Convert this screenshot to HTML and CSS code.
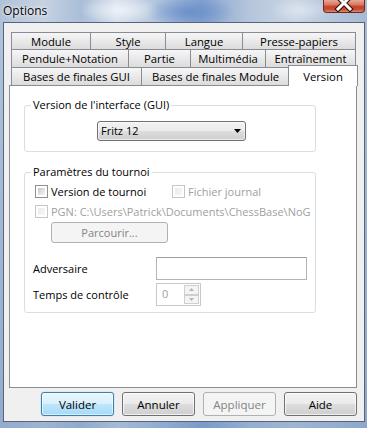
FILE: index.html
```html
<!DOCTYPE html>
<html lang="fr">
<head>
<meta charset="utf-8">
<title>Options</title>
<link rel="stylesheet" href="styles.css">
</head>
<body>
<div class="window">
  <div class="titlebar">
    <span class="title">Options</span>
    <div class="close">
      <svg width="42" height="13" viewBox="0 0 42 13">
        <path d="M15 -3 L27 9 M27 -3 L15 9" stroke="#3b140c" stroke-width="5.2" stroke-linecap="square" fill="none"/>
        <path d="M15 -3 L27 9 M27 -3 L15 9" stroke="#ffffff" stroke-width="3" stroke-linecap="square" fill="none"/>
      </svg>
    </div>
  </div>
  <div class="client">
    <div class="tabs">
      <div class="tabrow r1">
        <div class="tab">Module</div>
        <div class="tab">Style</div>
        <div class="tab">Langue</div>
        <div class="tab">Presse-papiers</div>
      </div>
      <div class="tabrow r2">
        <div class="tab">Pendule+Notation</div>
        <div class="tab">Partie</div>
        <div class="tab">Multimédia</div>
        <div class="tab">Entraînement</div>
      </div>
      <div class="tabrow r3">
        <div class="tab">Bases de finales GUI</div>
        <div class="tab">Bases de finales Module</div>
        <div class="tab active">Version</div>
      </div>
    </div>
    <div class="panel">
      <fieldset class="group g1">
        <legend>Version de l'interface (GUI)</legend>
        <div class="select">
          <span>Fritz 12</span>
          <svg class="arrow" width="7" height="4" viewBox="0 0 7 4"><path d="M0 0 H7 L3.5 4 Z" fill="#000"/></svg>
        </div>
      </fieldset>
      <fieldset class="group g2">
        <legend>Paramètres du tournoi</legend>
        <div class="check-row first">
          <label class="check tourn"><span class="cb"></span><span>Version de tournoi</span></label>
          <label class="check disabled"><span class="cb"></span><span>Fichier journal</span></label>
        </div>
        <div class="check-row">
          <label class="check disabled"><span class="cb"></span><span>PGN: C:\Users\Patrick\Documents\ChessBase\NoG</span></label>
        </div>
        <div class="btn browse disabled">Parcourir...</div>
        <div class="field-row adv">
          <span class="label">Adversaire</span>
          <div class="input"></div>
        </div>
        <div class="field-row tc">
          <span class="label">Temps de contrôle</span>
          <div class="spin">
            <span class="spin-val">0</span>
            <div class="spin-btns">
              <div class="spin-btn"><svg width="5" height="3" viewBox="0 0 5 3"><path d="M0 3 H5 L2.5 0 Z" fill="#b5b5b5"/></svg></div>
              <div class="spin-btn"><svg width="5" height="3" viewBox="0 0 5 3"><path d="M0 0 H5 L2.5 3 Z" fill="#b5b5b5"/></svg></div>
            </div>
          </div>
        </div>
      </fieldset>
    </div>
    <div class="buttons">
      <div class="btn default">Valider</div>
      <div class="btn">Annuler</div>
      <div class="btn disabled">Appliquer</div>
      <div class="btn">Aide</div>
    </div>
  </div>
</div>
</body>
</html>
```

FILE: styles.css
```css
* { box-sizing: border-box; }

html, body {
  margin: 0;
  padding: 0;
}

body {
  width: 367px;
  height: 428px;
  overflow: hidden;
  font-family: "Open Sans", "Noto Sans", sans-serif;
  font-size: 11px;
  color: #000;
}

.window {
  height: 428px;
  display: flex;
  flex-direction: column;
  background:
    radial-gradient(ellipse 40px 14px at 120px 10px, rgba(240,244,249,0.9), rgba(240,244,249,0) 100%),
    radial-gradient(ellipse 45px 16px at 190px 12px, rgba(100,138,198,0.85), rgba(100,138,198,0) 100%),
    radial-gradient(ellipse 30px 12px at 300px 10px, rgba(225,232,241,0.8), rgba(225,232,241,0) 100%),
    linear-gradient(to bottom, rgba(255,255,255,0) 0px, rgba(255,255,255,0) 22px, rgba(110,142,192,0.45) 100%),
    linear-gradient(to right, #b0c2d9 0%, #c6d2e1 12%, #a9bed8 22%, #d3dde9 32%, #abc0dc 45%, #86a4d0 55%, #b5c6dc 68%, #c8d4e3 80%, #a5bad6 100%);
}

.titlebar {
  height: 22px;
  display: flex;
  justify-content: space-between;
  align-items: flex-start;
  flex: none;
}

.title {
  padding: 3px 0 0 3px;
  font-size: 12px;
  line-height: 16px;
  color: #000;
  text-shadow: 0 0 5px rgba(255,255,255,0.9), 0 0 2px rgba(255,255,255,0.9);
}

.close {
  width: 42px;
  height: 13px;
  margin-right: 2px;
  border: 1px solid #6d2a20;
  border-top: none;
  border-radius: 0 0 4px 4px;
  background: linear-gradient(to bottom, #e7a797 0%, #d9775f 40%, #c5422b 55%, #c94f38 80%, #e08a72 100%);
  overflow: hidden;
  position: relative;
}

.close svg {
  position: absolute;
  left: -1px;
  top: 0;
}

.client {
  flex: 1;
  margin: 0 2px 6px 3px;
  background: #f0f0f0;
  border: 1px solid #56667a;
  padding: 9px 7px 0 5px;
  display: flex;
  flex-direction: column;
}

.tabs {
  margin-left: 2px;
  width: 345px;
}

.tabrow {
  display: grid;
}

.r1 { grid-template-columns: 80px 75px 77px 113px; height: 17px; }
.r2 { grid-template-columns: 118px 62px 75px 90px; height: 18px; }
.r3 { grid-template-columns: 131px 148px 66px; height: 18px; }

.tab {
  display: flex;
  align-items: center;
  justify-content: center;
  white-space: nowrap;
  border-top: 1px solid #898c95;
  border-right: 1px solid #898c95;
  background: linear-gradient(to bottom, #f6f6f6 0%, #e9e9e9 50%, #dcdcdc 100%);
  color: #000;
  line-height: 15px;
  font-size: 11.3px;
}

.tab:first-child {
  border-left: 1px solid #898c95;
}

.tab.active {
  background: #fff;
  margin: -2px -2px -1px -2px;
  border-left: 1px solid #898c95;
  position: relative;
  z-index: 1;
  align-items: flex-start;
  padding-top: 3px;
}

.panel {
  width: 348px;
  height: 303px;
  border: 1px solid #898c95;
  background: #fff;
  padding: 0;
}

.group {
  margin: 0 0 0 14px;
  width: 292px;
  border: 1px solid #d5dfe5;
  border-radius: 3px;
  padding: 0;
  min-width: 0;
}

.group legend {
  margin-left: 6px;
  padding: 0 2px;
  line-height: 16px;
}

.g1 {
  margin-top: 11px;
  padding-bottom: 10px;
}

.g2 {
  margin-top: 12px;
  padding-bottom: 6px;
}

.select {
  margin: 8px 0 0 72px;
  width: 149px;
  height: 20px;
  border: 1px solid #707070;
  border-radius: 3px;
  background: linear-gradient(to bottom, #f2f2f2 0%, #ebebeb 50%, #dddddd 51%, #cfcfcf 100%);
  box-shadow: inset 0 0 0 1px rgba(255,255,255,0.6);
  display: flex;
  align-items: center;
  justify-content: space-between;
  padding: 0 4px 0 3px;
  line-height: 16px;
}

.arrow {
  display: block;
}

.check-row {
  display: flex;
  height: 20px;
  padding-left: 10px;
}

.check-row.first {
  margin-top: 2px;
}

.check {
  display: flex;
  align-items: flex-start;
  white-space: nowrap;
  line-height: 19px;
}

.check.tourn {
  width: 137px;
}

.check .cb {
  margin-top: 3px;
  margin-right: 3px;
}

.cb {
  display: block;
  flex: none;
  width: 13px;
  height: 13px;
  border: 1px solid #8e8f8f;
  padding: 2px;
  background: linear-gradient(135deg, #c2c4c6 0%, #e4e5e6 60%, #f4f4f4 100%) content-box, #fff;
}

.check.disabled {
  color: #a0a0a0;
}

.check.disabled .cb {
  border-color: #c6c6c6;
  background: linear-gradient(135deg, #ececec 0%, #f6f6f6 100%) content-box, #fff;
}

.btn {
  display: flex;
  align-items: center;
  justify-content: center;
  height: 24px;
  width: 73px;
  border: 1px solid #707070;
  border-radius: 3px;
  background: linear-gradient(to bottom, #f2f2f2 0%, #ebebeb 50%, #dddddd 51%, #cfcfcf 100%);
  box-shadow: inset 0 0 0 1px rgba(255,255,255,0.7);
  color: #000;
  white-space: nowrap;
  font-size: 11.5px;
}

.btn.default {
  border-color: #3c7fb1;
  background: linear-gradient(to bottom, #eaf6fd 0%, #d9f0fc 50%, #bee6fd 51%, #a7d9f5 100%);
  box-shadow: inset 0 0 0 1px rgba(255,255,255,0.6), 0 0 1px #5aa8d8;
}

.btn.disabled {
  border-color: #adb2b5;
  background: #f4f4f4;
  box-shadow: none;
  color: #838383;
}

.btn.browse {
  margin: 0 0 0 26px;
  width: 117px;
  height: 21px;
  font-size: 11px;
}

.field-row {
  display: flex;
  align-items: center;
  padding-left: 8px;
}

.field-row .label {
  width: 123px;
  flex: none;
}

.adv {
  margin-top: 14px;
}

.tc {
  margin-top: 3px;
}

.input {
  width: 151px;
  height: 23px;
  border: 1px solid #b4b4b4;
  border-top-color: #a0a0a0;
  background: #fff;
}

.spin {
  width: 45px;
  height: 23px;
  border: 1px solid #c9c9c9;
  background: #fff;
  display: flex;
  justify-content: space-between;
  padding: 1px 1px 1px 5px;
}

.spin-val {
  color: #a0a0a0;
  line-height: 18px;
}

.spin-btns {
  width: 15px;
  display: flex;
  flex-direction: column;
}

.spin-btn {
  flex: 1;
  border: 1px solid #cfcfcf;
  background: #f4f4f4;
  display: flex;
  align-items: center;
  justify-content: center;
}

.spin-btn svg {
  display: block;
}

.buttons {
  display: flex;
  justify-content: flex-end;
  gap: 8px;
  margin-top: 4px;
}
```
